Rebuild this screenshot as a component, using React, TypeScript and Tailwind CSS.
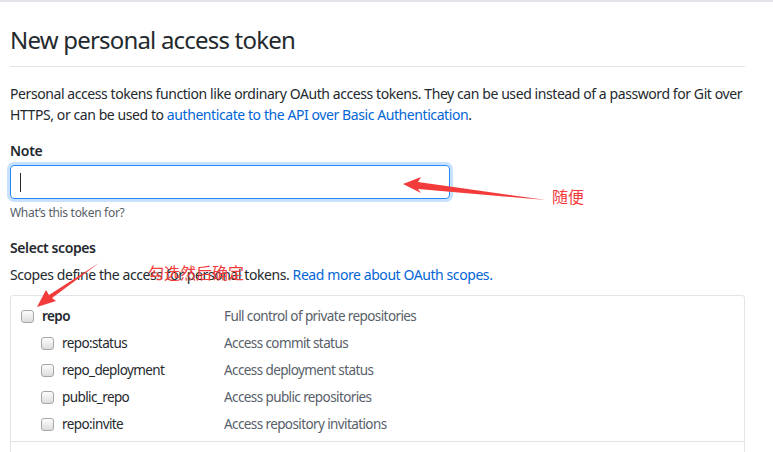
import React from "react";

const scopes = [
  { name: "repo:status", desc: "Access commit status" },
  { name: "repo_deployment", desc: "Access deployment status" },
  { name: "public_repo", desc: "Access public repositories" },
  { name: "repo:invite", desc: "Access repository invitations" },
];

function Checkbox() {
  return (
    <span className="inline-block w-[13px] h-[13px] rounded-[3px] border border-[#a6a6a6] bg-gradient-to-b from-[#fdfdfd] to-[#dcdcdc] shrink-0" />
  );
}

function Annotations() {
  return (
    <div className="pointer-events-none absolute inset-0">
      <svg width="773" height="452" className="absolute left-0 top-0">
        {/* arrow to the note input */}
        <polygon points="403,182 421,175 418,180 546,198 418,187 421,191" fill="#f33b3b" />
        {/* arrow to the repo checkbox */}
        <polygon points="37,305 46,288 49,293 99,261 52,296 56,299" fill="#f33b3b" />
      </svg>
      <span
        className="absolute left-[552px] top-[184px] text-[16px] leading-[20px] text-[#f33b3b]"
        style={{ fontFamily: "'Noto Sans CJK SC', sans-serif" }}
      >
        随便
      </span>
      <span
        className="absolute left-[148px] top-[260px] text-[16px] leading-[20px] text-[#f33b3b]"
        style={{ fontFamily: "'Noto Sans CJK SC', sans-serif" }}
      >
        勾选然后确定
      </span>
    </div>
  );
}

export default function App() {
  return (
    <div
      className="relative w-[773px] h-[452px] overflow-hidden bg-white text-[#24292e] border-t-2 border-[#e1e4e8]"
      style={{ fontFamily: "'Noto Sans', 'Liberation Sans', sans-serif" }}
    >
      <div className="ml-[10px] w-[735px] flex flex-col">
        <h1 className="mt-[20px] pb-[8px] border-b border-[#e1e4e8] text-[24px] leading-[36px] font-normal tracking-[-0.8px]">
          New personal access token
        </h1>
        <p className="mt-[16px] text-[14px] leading-[21px] tracking-[-0.42px]">
          Personal access tokens function like ordinary OAuth access tokens. They can be used instead of a password for Git over
          HTTPS, or can be used to{" "}
          <a className="text-[#0366d6]">authenticate to the API over Basic Authentication</a>.
        </p>

        <label className="mt-[15px] text-[14px] leading-[21px] font-semibold tracking-[-0.3px]">Note</label>
        <div className="mt-[4px] w-[440px] h-[34px] rounded-[4px] border border-[#2188ff] ring-[3px] ring-[#c8e1ff] flex items-center pl-[9px]">
          <span className="w-px h-[19px] bg-[#24292e]" />
        </div>
        <p className="mt-[5px] text-[12px] leading-[18px] text-[#586069] tracking-[-0.3px]">What’s this token for?</p>

        <h3 className="mt-[15px] text-[14px] leading-[21px] font-semibold tracking-[-0.4px]">Select scopes</h3>
        <p className="mt-[6px] text-[14px] leading-[21px] tracking-[-0.42px]">
          Scopes define the access for personal tokens.{" "}
          <a className="text-[#0366d6]">Read more about OAuth scopes.</a>
        </p>

        <div className="mt-[10px] border border-[#e1e4e8] rounded-t-[3px] text-[13.5px] tracking-[-0.6px]">
          <div className="pt-[7px] pb-[3px] border-b border-[#e1e4e8]">
            <div className="flex items-center h-[27px] pl-[10px]">
              <div className="w-[203px] flex items-center gap-[8px]">
                <Checkbox />
                <span className="font-semibold">repo</span>
              </div>
              <span className="text-[#586069]">Full control of private repositories</span>
            </div>
            {scopes.map((s) => (
              <div key={s.name} className="flex items-center h-[27px] pl-[30px]">
                <div className="w-[183px] flex items-center gap-[8px]">
                  <Checkbox />
                  <span>{s.name}</span>
                </div>
                <span className="text-[#586069]">{s.desc}</span>
              </div>
            ))}
          </div>
          <div className="h-[20px]" />
        </div>
      </div>
      <Annotations />
    </div>
  );
}
